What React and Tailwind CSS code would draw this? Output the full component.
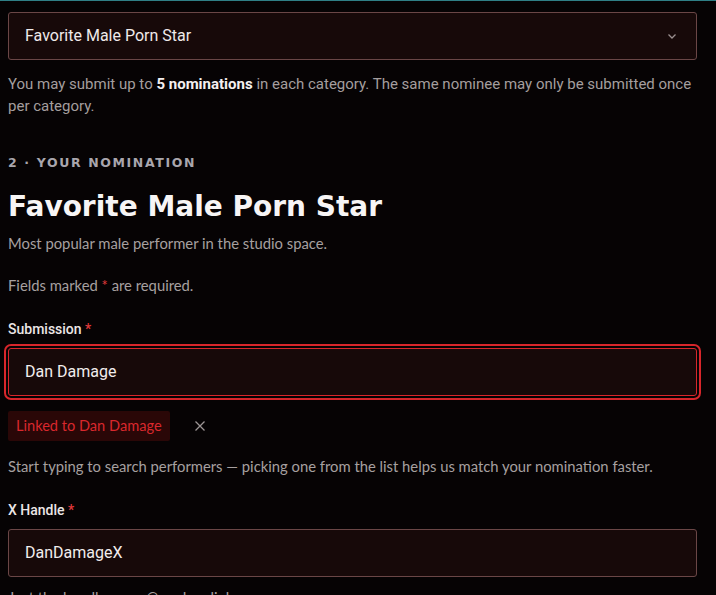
import React from "react";

export default function App() {
  return (
    <div className="w-[716px] min-h-[595px] bg-[#060304] border-t border-[#2f7f86] overflow-hidden" style={{ fontFamily: "Roboto, sans-serif" }}>
      <div className="ml-2 w-[689px] pt-[11px]">
        <div className="h-12 border border-[#6a4646] bg-[#170909] rounded-[3px] px-4 flex items-center justify-between">
          <span className="text-[16px] text-[#efeaea] font-['Roboto']">Favorite Male Porn Star</span>
          <svg width="12" height="12" viewBox="0 0 12 12" className="mr-[2px]">
            <path d="M2.5 4.5 L6 8 L9.5 4.5" fill="none" stroke="#9a8f8f" strokeWidth="1.3" />
          </svg>
        </div>
        <p className="mt-[13px] text-[15px] leading-[22px] text-[#a49e9e] font-['Roboto']">
          You may submit up to <b className="text-[#f4f0f0] font-bold">5 nominations</b> in each category. The same nominee may only be submitted once per category.
        </p>
        <div className="mt-[38px] text-[12.5px] leading-4 font-bold tracking-[0.13em] text-[#a9a6ad] font-['DejaVu_Sans']">
          2 · YOUR NOMINATION
        </div>
        <h1 className="mt-[18px] text-[28px] leading-9 font-bold text-[#f7f5f5] font-['DejaVu_Sans']">
          Favorite Male Porn Star
        </h1>
        <p className="mt-2 text-[14.8px] leading-5 text-[#a6a0a0] font-['Lato']">
          Most popular male performer in the studio space.
        </p>
        <p className="mt-[22px] text-[14.8px] leading-5 text-[#a6a0a0] font-['Lato']">
          Fields marked <span className="text-[#e0393b]">*</span> are required.
        </p>
        <label className="block mt-6 text-[14px] leading-5 font-medium text-[#ece6e6] font-['Roboto']">
          Submission <span className="text-[#e0393b]">*</span>
        </label>
        <div className="mt-[9px] h-12 border border-[#d8262b] bg-[#170909] rounded-[3px] px-4 flex items-center outline-2 outline-offset-2 outline-[#d8262b] [outline-style:solid]">
          <span className="text-[16px] text-[#f2eded] font-['Roboto']">Dan Damage</span>
        </div>
        <div className="mt-[15px] flex items-center gap-6">
          <span className="h-[30px] px-2 flex items-center bg-[#2a0707] rounded-[2px] text-[14.6px] text-[#d9282d] font-['Lato']">
            Linked to Dan Damage
          </span>
          <svg width="12" height="12" viewBox="0 0 12 12">
            <path d="M1.5 1.5 L10.5 10.5 M10.5 1.5 L1.5 10.5" stroke="#9c9595" strokeWidth="1.3" fill="none" />
          </svg>
        </div>
        <p className="mt-[15px] text-[14.8px] leading-5 text-[#a6a0a0] font-['Lato']">
          Start typing to search performers — picking one from the list helps us match your nomination faster.
        </p>
        <label className="block mt-6 text-[14px] leading-5 font-medium text-[#ece6e6] font-['Roboto']">
          X Handle <span className="text-[#e0393b]">*</span>
        </label>
        <div className="mt-[9px] h-12 border border-[#6a4646] bg-[#170909] rounded-[3px] px-4 flex items-center">
          <span className="text-[16px] text-[#f2eded] font-['Roboto']">DanDamageX</span>
        </div>
        <p className="mt-[10px] text-[14.8px] leading-5 text-[#a6a0a0] font-['Lato']">
          Just the handle — no @ and no link.
        </p>
      </div>
    </div>
  );
}
